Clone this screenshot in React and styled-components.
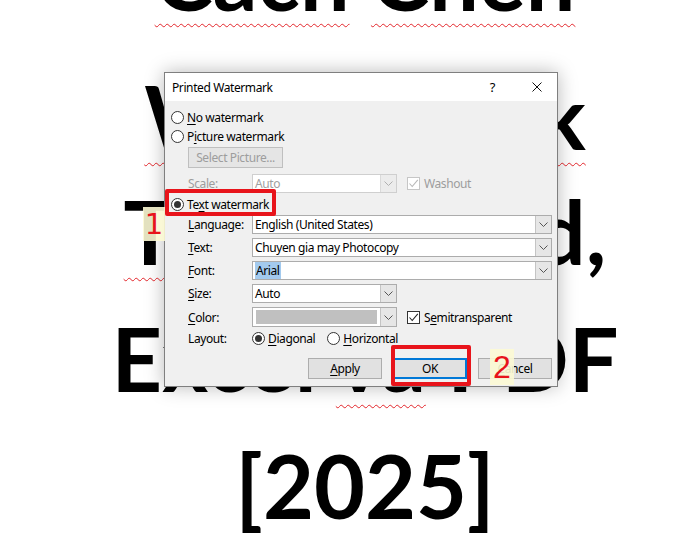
import React from 'react';
import styled, { createGlobalStyle, css } from 'styled-components';

const GlobalStyle = createGlobalStyle`
  html, body { margin: 0; padding: 0; background: #fff; }
  #root { width: 685px; height: 541px; overflow: hidden; }
`;

const Page = styled.div`
  position: relative;
  width: 685px;
  height: 541px;
  overflow: hidden;
  background: #fff;
`;

/* big document heading behind the dialog */
const Heading = styled.h1`
  margin: -86px 0 0 45px;
  font-family: Lato, "Noto Sans", sans-serif;
  font-weight: 700;
  font-size: 88px;
  line-height: 127px;
  text-align: center;
  color: #000;
  white-space: nowrap;
`;

const Line = styled.div`
  margin-top: ${p => p.$mt || 0}px;
`;

const Typo = styled.span`
  text-decoration: underline wavy #e3262b;
  text-decoration-thickness: 1px;
  text-underline-offset: 12px;
  text-decoration-skip-ink: none;
`;

/* dialog */
const Dialog = styled.div`
  position: absolute;
  left: 164px;
  top: 72px;
  width: 394px;
  height: 315px;
  box-sizing: border-box;
  border: 1px solid #7f7f7f;
  background: #f0f0f0;
  box-shadow: 0 0 18px rgba(0, 0, 0, 0.28);
  font-family: "Noto Sans", sans-serif;
  font-size: 12px;
  letter-spacing: -0.4px;
  color: #000;
  display: flex;
  flex-direction: column;
`;

const TitleBar = styled.div`
  height: 28px;
  background: #fff;
  display: flex;
  align-items: center;
  padding: 0 15px 0 7px;
  flex: none;
`;

const Title = styled.div`
  flex: 1;
`;

const Help = styled.span`
  font-size: 13px;
  margin-right: 37px;
`;

const Body = styled.div`
  display: flex;
  flex-direction: column;
  padding: 7px 5px 0 6px;
`;

const Row = styled.div`
  display: flex;
  align-items: center;
  height: ${p => p.$h || 19}px;
  margin-top: ${p => p.$mt || 0}px;
  padding-left: ${p => p.$indent ? 17 : 0}px;
  justify-content: ${p => p.$end ? 'flex-end' : 'flex-start'};
  gap: ${p => p.$gap || 0}px;
  color: ${p => p.$dim ? '#9d9d9d' : '#000'};
`;

const RadioBox = styled.span`
  width: 13px;
  height: 13px;
  box-sizing: border-box;
  border: 1px solid #333;
  border-radius: 50%;
  background: #fff;
  display: inline-flex;
  align-items: center;
  justify-content: center;
  margin-right: 3px;
  flex: none;
  ${p => p.$checked && css`
    &::after {
      content: "";
      width: 7px;
      height: 7px;
      border-radius: 50%;
      background: #333;
    }
  `}
`;

const U = styled.span`
  text-decoration: underline;
  text-underline-offset: 2px;
`;

const Label = styled.span`
  width: 64px;
  flex: none;
`;

const Combo = styled.div`
  width: ${p => p.$w}px;
  height: 100%;
  box-sizing: border-box;
  border: 1px solid ${p => p.$disabled ? '#cfcfcf' : '#acacac'};
  background: #fff;
  display: flex;
  align-items: center;
  color: ${p => p.$disabled ? '#a0a0a0' : '#000'};
  flex: none;
`;

const ComboText = styled.span`
  flex: 1;
  padding-left: 2px;
  display: flex;
  align-items: center;
  height: 100%;
`;

const Selected = styled.span`
  background: #a3caee;
  padding: 0 1px;
`;

const Swatch = styled.span`
  flex: 1;
  height: 14px;
  margin: 0 3px;
  background: #c0c0c0;
`;

const DropBtn = styled.span`
  width: 16px;
  height: 100%;
  box-sizing: border-box;
  border-left: 1px solid ${p => p.$disabled ? '#dadada' : '#c4c4c4'};
  background: ${p => p.$disabled ? '#ececec' : '#e6e6e6'};
  display: flex;
  align-items: center;
  justify-content: center;
  flex: none;
`;

const CheckBox = styled.span`
  width: 13px;
  height: 13px;
  box-sizing: border-box;
  border: 1px solid ${p => p.$disabled ? '#c6c6c6' : '#333'};
  background: #fff;
  display: inline-flex;
  align-items: center;
  justify-content: center;
  margin: 0 4px 0 10px;
  flex: none;
`;

const PlainButton = styled.div`
  width: ${p => p.$w || 74}px;
  height: 21px;
  box-sizing: border-box;
  border: 1px solid ${p => p.$default ? '#0078d7' : p.$disabled ? '#bfbfbf' : '#adadad'};
  box-shadow: ${p => p.$default ? 'inset 0 0 0 1px #0078d7' : 'none'};
  background: ${p => p.$disabled ? '#e5e5e5' : '#e1e1e1'};
  color: ${p => p.$disabled ? '#9d9d9d' : '#000'};
  display: flex;
  align-items: center;
  justify-content: center;
  flex: none;
`;

/* annotations drawn over the screenshot */
const Mark = styled.div`
  position: absolute;
  left: ${p => p.$x}px;
  top: ${p => p.$y}px;
  width: ${p => p.$w}px;
  height: ${p => p.$h}px;
  box-sizing: border-box;
  border: 4px solid #e8141b;
  border-radius: 2px;
`;

const Tag = styled.div`
  position: absolute;
  left: ${p => p.$x}px;
  top: ${p => p.$y}px;
  width: ${p => p.$w}px;
  height: ${p => p.$h}px;
  background: rgba(252, 250, 212, 0.9);
  color: #e8141b;
  font-family: ${p => p.$foot ? '"DejaVu Sans"' : '"Liberation Sans"'}, Arial, sans-serif;
  font-size: ${p => p.$size}px;
  display: flex;
  align-items: center;
  justify-content: center;
`;

const Chevron = ({ disabled }) => (
  <svg width="9" height="5" viewBox="0 0 9 5">
    <path d="M0.5 0.5 L4.5 4.5 L8.5 0.5" fill="none" stroke={disabled ? '#b0b0b0' : '#555'} strokeWidth="1" />
  </svg>
);

const Tick = ({ disabled }) => (
  <svg width="11" height="11" viewBox="0 0 11 11">
    <path d="M1.5 5.5 L4.2 8.5 L9.8 1.8" fill="none" stroke={disabled ? '#b8b8b8' : '#222'} strokeWidth="1.1" />
  </svg>
);

const Close = () => (
  <svg width="10" height="10" viewBox="0 0 10 10">
    <path d="M0.5 0.5 L9.5 9.5 M9.5 0.5 L0.5 9.5" stroke="#111" strokeWidth="1" />
  </svg>
);

function Select({ w, disabled, children }) {
  return (
    <Combo $w={w} $disabled={disabled}>
      <ComboText>{children}</ComboText>
      <DropBtn $disabled={disabled}><Chevron disabled={disabled} /></DropBtn>
    </Combo>
  );
}

function Radio({ checked, children }) {
  return (
    <>
      <RadioBox $checked={checked} />
      <span>{children}</span>
    </>
  );
}

export default function App() {
  return (
    <Page>
      <GlobalStyle />
      <Heading>
        <Line><Typo>Cách</Typo> <Typo>Chèn</Typo></Line>
        <Line $mt={12}><Typo>Watermark</Typo></Line>
        <Line $mt={-12}><Typo>Trong</Typo> Word,</Line>
        <Line>Excel <Typo>và</Typo> PDF</Line>
        <Line>[2025]</Line>
      </Heading>

      <Dialog>
        <TitleBar>
          <Title>Printed Watermark</Title>
          <Help>?</Help>
          <Close />
        </TitleBar>
        <Body>
          <Row><Radio><U>N</U>o watermark</Radio></Row>
          <Row><Radio>P<U>i</U>cture watermark</Radio></Row>
          <Row $indent $h={21} $mt={1}>
            <PlainButton $w={95} $disabled>Select Picture...</PlainButton>
          </Row>
          <Row $indent $mt={6} $dim>
            <Label>Scale:</Label>
            <Select w={145} disabled>Auto</Select>
            <CheckBox $disabled><Tick disabled /></CheckBox>
            <span>Washout</span>
          </Row>
          <Row $mt={2}><Radio checked>Te<U>x</U>t watermark</Radio></Row>
          <Row $indent $mt={1}>
            <Label><U>L</U>anguage:</Label>
            <Select w={300}>English (United States)</Select>
          </Row>
          <Row $indent $mt={4}>
            <Label><U>T</U>ext:</Label>
            <Select w={300}>Chuyen gia may Photocopy</Select>
          </Row>
          <Row $indent $mt={4}>
            <Label><U>F</U>ont:</Label>
            <Select w={300}><Selected>Arial</Selected></Select>
          </Row>
          <Row $indent $mt={4}>
            <Label><U>S</U>ize:</Label>
            <Select w={145}>Auto</Select>
          </Row>
          <Row $indent $mt={4} $h={20}>
            <Label><U>C</U>olor:</Label>
            <Combo $w={145}>
              <Swatch />
              <DropBtn><Chevron /></DropBtn>
            </Combo>
            <CheckBox><Tick /></CheckBox>
            <span>S<U>e</U>mitransparent</span>
          </Row>
          <Row $indent $mt={2}>
            <Label>Layout:</Label>
            <Radio checked><U>D</U>iagonal</Radio>
            <span style={{ width: 12 }} />
            <Radio><U>H</U>orizontal</Radio>
          </Row>
          <Row $end $gap={11} $h={21} $mt={10}>
            <PlainButton><U>A</U>pply</PlainButton>
            <PlainButton $default>OK</PlainButton>
            <PlainButton><U>C</U>ancel</PlainButton>
          </Row>
        </Body>
      </Dialog>

      <Mark $x={165} $y={189} $w={111} $h={27} />
      <Tag $x={143} $y={207} $w={22} $h={34} $size={29} $foot>1</Tag>
      <Mark $x={391} $y={345} $w={80} $h={41} />
      <Tag $x={490} $y={349} $w={24} $h={36} $size={32}>2</Tag>
    </Page>
  );
}
